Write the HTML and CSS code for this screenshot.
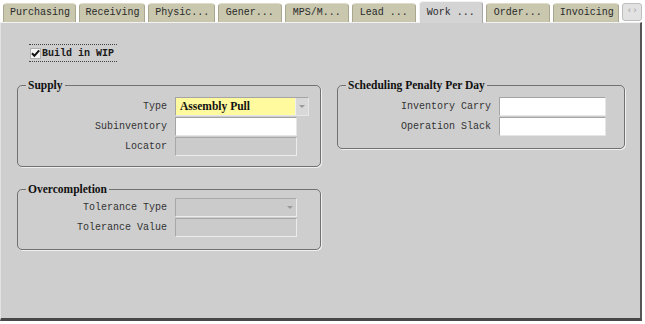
FILE: index.html
```html
<!DOCTYPE html>
<html lang="en">
<head>
    <meta charset="UTF-8">
    <meta name="viewport" content="width=device-width, initial-scale=1.0">
    <title>Item - Work In Process</title>
    <link rel="stylesheet" href="styles.css">
</head>
<body>
<div class="window">
    <!-- tab strip -->
    <div class="tabs">
        <div class="tab">Purchasing</div>
        <div class="tab">Receiving</div>
        <div class="tab">Physic...</div>
        <div class="tab">Gener...</div>
        <div class="tab">MPS/M...</div>
        <div class="tab">Lead ...</div>
        <div class="tab active">Work ...</div>
        <div class="tab">Order...</div>
        <div class="tab">Invoicing</div>
        <div class="tab-scroll">‹›</div>
    </div>

    <div class="panel">
        <label class="wip">
            <span class="check">
                <svg width="11" height="11" viewBox="0 0 11 11">
                    <rect x="0.5" y="0.5" width="10" height="10" fill="#f6f6f6" stroke="#b0b0b0"/>
                    <path d="M2 5.2 L4.4 7.8 L9.2 2.4" fill="none" stroke="#111" stroke-width="2"/>
                </svg>
            </span>
            Build in WIP
        </label>

        <div class="groups">
            <div class="col">
                <fieldset class="group supply">
                    <legend>Supply</legend>
                    <div class="form">
                        <span class="lbl">Type</span>
                        <div class="field combo required">
                            <span class="value">Assembly Pull</span>
                            <span class="drop"><i class="arrow"></i></span>
                        </div>
                        <span class="lbl">Subinventory</span>
                        <div class="field"></div>
                        <span class="lbl">Locator</span>
                        <div class="field disabled"></div>
                    </div>
                </fieldset>

                <fieldset class="group overcompletion">
                    <legend>Overcompletion</legend>
                    <div class="form">
                        <span class="lbl">Tolerance Type</span>
                        <div class="field combo disabled">
                            <span class="value"></span>
                            <span class="drop"><i class="arrow"></i></span>
                        </div>
                        <span class="lbl">Tolerance Value</span>
                        <div class="field disabled"></div>
                    </div>
                </fieldset>
            </div>

            <fieldset class="group schedule">
                <legend>Scheduling Penalty Per Day</legend>
                <div class="form">
                    <span class="lbl">Inventory Carry</span>
                    <div class="field"></div>
                    <span class="lbl">Operation Slack</span>
                    <div class="field"></div>
                </div>
            </fieldset>
        </div>
    </div>
</div>
</body>
</html>
```

FILE: styles.css
```css
html, body {
    margin: 0;
    background: #fff;
    font-family: "Liberation Mono", "DejaVu Sans Mono", monospace;
    font-size: 10px;
    color: #2a2a2a;
}

.window {
    width: 642px;
}

/* tab strip */
.tabs {
    display: flex;
    align-items: flex-end;
    gap: 3px;
    height: 22px;
    padding-left: 3px;
}

.tab {
    box-sizing: border-box;
    height: 19px;
    min-width: 64px;
    padding: 0 6px;
    background: #c9c7ae;
    border: 1px solid #a9a790;
    border-bottom: none;
    border-top-color: #dddbc8;
    border-radius: 4px 4px 0 0;
    line-height: 18px;
    text-align: center;
    white-space: nowrap;
}

.tab.active {
    position: relative;
    height: 22px;
    margin-bottom: -1px;
    padding-top: 2px;
    background: #d4d4d4;
    border-color: #f2f2f2 #a8a8a8 #d4d4d4 #f2f2f2;
}

.tab-scroll {
    box-sizing: border-box;
    width: 20px;
    height: 18px;
    margin-bottom: 1px;
    background: #e2e2e2;
    border: 1px solid #bdbdbd;
    border-radius: 3px;
    color: #a0a0a0;
    font-size: 9px;
    line-height: 15px;
    text-align: center;
}

/* main panel */
.panel {
    box-sizing: border-box;
    height: 299px;
    padding: 21px 0 0 16px;
    background: #cecece;
    border-top: 1px solid #f2f2f2;
    border-left: 1px solid #e2e2e2;
    border-right: 2px solid #555;
    border-bottom: 3px solid #474747;
}

.wip {
    display: flex;
    align-items: center;
    width: fit-content;
    height: 16px;
    margin-left: 12px;
    padding: 0 3px 0 1px;
    border-top: 1px dotted #444;
    border-bottom: 1px dotted #444;
    color: #1a1a1a;
    font-weight: bold;
}

.check {
    display: flex;
    margin-right: 1px;
}

.groups {
    display: flex;
    align-items: flex-start;
    gap: 16px;
    margin-top: 16px;
}

.col {
    display: flex;
    flex-direction: column;
    gap: 15px;
}

/* group boxes */
.group {
    margin: 0;
    padding: 5px 0 10px 0;
    border: 1px solid #717171;
    border-radius: 5px;
    box-shadow: 1px 1px 0 #efefef;
}

.group legend {
    margin-left: 8px;
    padding: 0 2px;
    font: bold 11.5px "Liberation Serif", "DejaVu Serif", serif;
    line-height: 14px;
    color: #111;
}

.supply {
    width: 304px;
    box-sizing: border-box;
}

.overcompletion {
    width: 304px;
    box-sizing: border-box;
    padding: 2px 0 12px 0;
}

.schedule {
    width: 288px;
    box-sizing: border-box;
    padding-bottom: 12px;
}

.form {
    display: grid;
    grid-template-columns: 149px auto;
    column-gap: 8px;
    row-gap: 1px;
    align-items: center;
    justify-items: start;
}

.schedule .form {
    grid-template-columns: 153px auto;
}

.lbl {
    justify-self: end;
    white-space: nowrap;
    color: #333;
}

/* text fields */
.field {
    box-sizing: border-box;
    width: 122px;
    height: 19px;
    background: #fff;
    border: 1px solid;
    border-color: #a4a4a4 #e6e6e6 #e6e6e6 #a4a4a4;
}

.schedule .field {
    width: 107px;
}

.field.disabled {
    background: #cbcbcb;
    border-color: #a8a8a8 #ececec #ececec #a8a8a8;
}

.combo {
    display: flex;
}

.combo.required {
    width: 134px;
    background: #fffa9e;
}

.value {
    flex: 1;
    padding-left: 4px;
    font: bold 11.5px "Liberation Serif", "DejaVu Serif", serif;
    line-height: 17px;
    color: #111;
}

.drop {
    display: flex;
    align-items: center;
    justify-content: center;
    width: 12px;
    background: #d8d8d8;
    border-left: 1px solid #eee;
}

.disabled .drop {
    background: transparent;
    border-left: none;
}

.arrow {
    width: 0;
    height: 0;
    border-left: 3px solid transparent;
    border-right: 3px solid transparent;
    border-top: 3px solid #9a9a9a;
}
```
